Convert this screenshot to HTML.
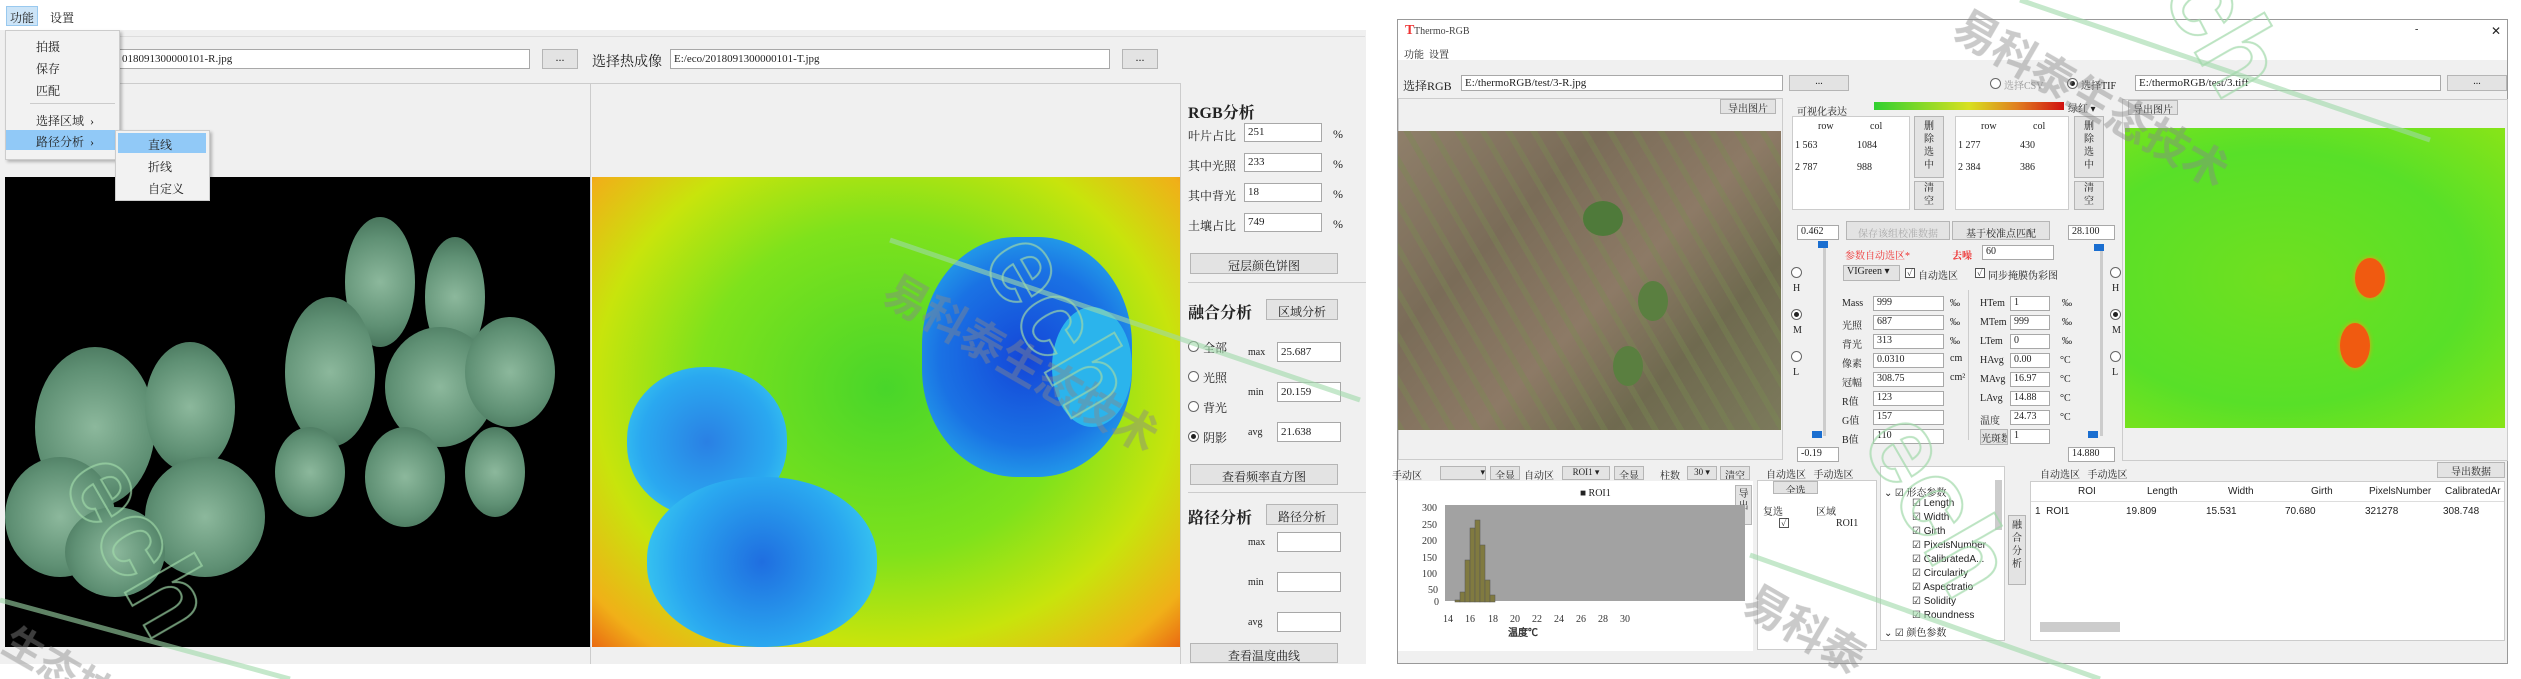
<!DOCTYPE html>
<html style="width:2521px;height:679px;overflow:hidden"><head><meta charset="utf-8"><style>
*{margin:0;padding:0;box-sizing:border-box}
body{width:2521px;height:679px;background:#fff;position:relative;overflow:hidden;font-family:"Liberation Serif","Noto Serif CJK SC",serif;color:#222}
div,span{position:absolute}
.in{background:#fff;border:1px solid #a8a8a8;font-size:11px;padding-left:3px;line-height:normal;white-space:nowrap;overflow:hidden}
.btn{background:#e3e3e3;border:1px solid #b5b5b5;font-size:12px;text-align:center;white-space:nowrap;overflow:hidden}
.t{font-size:12px;white-space:nowrap}
.s{font-size:10px;white-space:nowrap}
.b{font-weight:bold;font-size:16px}
.rad{width:11px;height:11px;border:1px solid #666;border-radius:50%;background:#fff}
.rad.on::after{content:"";position:absolute;left:2px;top:2px;width:5px;height:5px;border-radius:50%;background:#222}
.cb{width:10px;height:10px;border:1px solid #555;background:#fff;font-size:9px;line-height:8px;text-align:center}
.leaf{border-radius:50%;background:radial-gradient(circle,#8cb89c,#5f9074 60%,#3e6a52)}
</style></head><body>

<!-- LEFT APP -->
<div style="left:0;top:0;width:1366px;height:664px;background:#f0f0f0"></div>
<div style="left:0;top:0;width:1366px;height:30px;background:#fff"></div>
<div style="left:6px;top:6px;width:32px;height:20px;background:#cce4f7;border:1px solid #99c9ef"></div>
<span class="t" style="left:10px;top:9px">功能</span>
<span class="t" style="left:50px;top:9px">设置</span>
<div style="left:5px;top:36px;width:1360px;height:1px;background:#ddd"></div>
<div class="in" style="left:118px;top:49px;width:412px;height:20px;padding-top:3px">018091300000101-R.jpg</div>
<div class="btn" style="left:542px;top:49px;width:36px;height:20px">...</div>
<span class="t" style="left:592px;top:51px;font-size:14px">选择热成像</span>
<div class="in" style="left:670px;top:49px;width:440px;height:20px;padding-top:3px">E:/eco/2018091300000101-T.jpg</div>
<div class="btn" style="left:1122px;top:49px;width:36px;height:20px">...</div>
<div style="left:5px;top:83px;width:1176px;height:1px;background:#ccc"></div>
<div style="left:590px;top:84px;width:1px;height:580px;background:#ccc"></div>
<div style="left:1180px;top:84px;width:1px;height:580px;background:#ccc"></div>
<!-- black plant image -->
<div style="left:5px;top:177px;width:585px;height:470px;background:#000;overflow:hidden">
 <div class="leaf" style="left:30px;top:170px;width:120px;height:160px"></div>
 <div class="leaf" style="left:140px;top:165px;width:90px;height:130px"></div>
 <div class="leaf" style="left:0px;top:280px;width:110px;height:120px"></div>
 <div class="leaf" style="left:140px;top:280px;width:120px;height:120px"></div>
 <div class="leaf" style="left:60px;top:330px;width:100px;height:90px"></div>
 <div class="leaf" style="left:340px;top:40px;width:70px;height:130px"></div>
 <div class="leaf" style="left:420px;top:60px;width:60px;height:120px"></div>
 <div class="leaf" style="left:280px;top:120px;width:90px;height:150px"></div>
 <div class="leaf" style="left:380px;top:150px;width:110px;height:120px"></div>
 <div class="leaf" style="left:460px;top:140px;width:90px;height:110px"></div>
 <div class="leaf" style="left:270px;top:250px;width:70px;height:90px"></div>
 <div class="leaf" style="left:360px;top:250px;width:80px;height:100px"></div>
 <div class="leaf" style="left:460px;top:250px;width:60px;height:90px"></div>
</div>
<!-- thermal image -->
<div style="left:592px;top:177px;width:588px;height:470px;background:radial-gradient(ellipse at 50% 45%,#48d62a 0%,#7ee21c 45%,#c8e40c 70%,#f0b018 90%,#ea6a12 100%);overflow:hidden">
 <div style="left:330px;top:60px;width:210px;height:240px;border-radius:45%;background:radial-gradient(circle,#1446d8,#1a72e4 55%,#2ac2ee)"></div>
 <div style="left:460px;top:130px;width:80px;height:120px;border-radius:50%;background:#2bb4ec"></div>
 <div style="left:35px;top:190px;width:160px;height:150px;border-radius:48%;background:radial-gradient(circle,#2a80e4,#2aa8f0 60%,#40d8f0)"></div>
 <div style="left:55px;top:300px;width:230px;height:170px;border-radius:48%;background:radial-gradient(circle,#1f6ee0,#2aa8f0 60%,#40d8f0)"></div>
</div>
<!-- dropdown menu -->
<div style="left:5px;top:30px;width:115px;height:130px;background:#f2f2f2;border:1px solid #ccc;box-shadow:2px 2px 3px rgba(0,0,0,.25)"></div>
<span class="t" style="left:36px;top:38px">拍摄</span>
<span class="t" style="left:36px;top:60px">保存</span>
<span class="t" style="left:36px;top:82px">匹配</span>
<div style="left:30px;top:103px;width:85px;height:1px;background:#ccc"></div>
<span class="t" style="left:36px;top:112px">选择区域 &nbsp;›</span>
<div style="left:6px;top:130px;width:112px;height:20px;background:#91c9f7"></div>
<span class="t" style="left:36px;top:133px">路径分析 &nbsp;›</span>
<div style="left:115px;top:130px;width:95px;height:71px;background:#f2f2f2;border:1px solid #ccc;box-shadow:2px 2px 3px rgba(0,0,0,.25)"></div>
<div style="left:118px;top:133px;width:88px;height:20px;background:#91c9f7"></div>
<span class="t" style="left:148px;top:136px">直线</span>
<span class="t" style="left:148px;top:158px">折线</span>
<span class="t" style="left:148px;top:180px">自定义</span>
<!-- right panel -->
<span class="b" style="left:1188px;top:100px">RGB分析</span>
<span class="t" style="left:1188px;top:127px">叶片占比</span><div class="in" style="left:1244px;top:123px;width:78px;height:19px;padding-top:2px">251</div><span class="t" style="left:1333px;top:127px">%</span>
<span class="t" style="left:1188px;top:157px">其中光照</span><div class="in" style="left:1244px;top:153px;width:78px;height:19px;padding-top:2px">233</div><span class="t" style="left:1333px;top:157px">%</span>
<span class="t" style="left:1188px;top:187px">其中背光</span><div class="in" style="left:1244px;top:183px;width:78px;height:19px;padding-top:2px">18</div><span class="t" style="left:1333px;top:187px">%</span>
<span class="t" style="left:1188px;top:217px">土壤占比</span><div class="in" style="left:1244px;top:213px;width:78px;height:19px;padding-top:2px">749</div><span class="t" style="left:1333px;top:217px">%</span>
<div class="btn" style="left:1190px;top:253px;width:148px;height:21px;padding-top:3px">冠层颜色饼图</div>
<div style="left:1188px;top:282px;width:178px;height:1px;background:#ccc"></div>
<span class="b" style="left:1188px;top:300px">融合分析</span>
<div class="btn" style="left:1266px;top:299px;width:72px;height:21px;padding-top:3px">区域分析</div>
<div class="rad" style="left:1188px;top:341px"></div><span class="t" style="left:1203px;top:339px">全部</span>
<div class="rad" style="left:1188px;top:371px"></div><span class="t" style="left:1203px;top:369px">光照</span>
<div class="rad" style="left:1188px;top:401px"></div><span class="t" style="left:1203px;top:399px">背光</span>
<div class="rad on" style="left:1188px;top:431px"></div><span class="t" style="left:1203px;top:429px">阴影</span>
<span class="s" style="left:1248px;top:347px">max</span><div class="in" style="left:1277px;top:342px;width:64px;height:20px;padding-top:3px">25.687</div>
<span class="s" style="left:1248px;top:387px">min</span><div class="in" style="left:1277px;top:382px;width:64px;height:20px;padding-top:3px">20.159</div>
<span class="s" style="left:1248px;top:427px">avg</span><div class="in" style="left:1277px;top:422px;width:64px;height:20px;padding-top:3px">21.638</div>
<div class="btn" style="left:1190px;top:464px;width:148px;height:21px;padding-top:3px">查看频率直方图</div>
<div style="left:1188px;top:492px;width:178px;height:1px;background:#ccc"></div>
<span class="b" style="left:1188px;top:505px">路径分析</span>
<div class="btn" style="left:1266px;top:504px;width:72px;height:21px;padding-top:3px">路径分析</div>
<span class="s" style="left:1248px;top:537px">max</span><div class="in" style="left:1277px;top:532px;width:64px;height:20px"></div>
<span class="s" style="left:1248px;top:577px">min</span><div class="in" style="left:1277px;top:572px;width:64px;height:20px"></div>
<span class="s" style="left:1248px;top:617px">avg</span><div class="in" style="left:1277px;top:612px;width:64px;height:20px"></div>
<div class="btn" style="left:1190px;top:643px;width:148px;height:20px;padding-top:3px">查看温度曲线</div>

<!-- RIGHT APP -->
<div style="left:1397px;top:19px;width:1111px;height:645px;background:#f0f0f0;border:1px solid #999"></div>
<div style="left:1398px;top:20px;width:1109px;height:40px;background:#fff"></div>
<span style="left:1405px;top:23px;font-size:14px;color:#e33;font-weight:bold">T</span>
<span class="s" style="left:1414px;top:26px;color:#444">Thermo-RGB</span>
<span class="s" style="left:2491px;top:24px;font-size:12px">✕</span>
<span class="s" style="left:2415px;top:24px">-</span>
<span class="s" style="left:1404px;top:46px">功能 &nbsp;设置</span>
<span class="t" style="left:1403px;top:77px">选择RGB</span>
<div class="in" style="left:1461px;top:75px;width:322px;height:16px;padding-top:1px">E:/thermoRGB/test/3-R.jpg</div>
<div class="btn" style="left:1789px;top:75px;width:60px;height:16px;font-size:10px">...</div>
<div class="rad" style="left:1990px;top:78px"></div><span class="s" style="left:2004px;top:77px;color:#999">选择CSV</span>
<div class="rad on" style="left:2067px;top:78px"></div><span class="s" style="left:2081px;top:77px">选择TIF</span>
<div class="in" style="left:2135px;top:75px;width:306px;height:16px;padding-top:1px">E:/thermoRGB/test/3.tiff</div>
<div class="btn" style="left:2447px;top:75px;width:60px;height:16px;font-size:10px">...</div>
<div style="left:1398px;top:98px;width:385px;height:362px;border:1px solid #ccc"></div>
<div class="btn" style="left:1720px;top:99px;width:56px;height:15px;font-size:10px">导出图片</div>
<!-- RGB soil image -->
<div style="left:1398px;top:131px;width:383px;height:299px;background:linear-gradient(135deg,#8f7f6a 0%,#7a6c58 30%,#8d7a66 55%,#6f6a4f 75%,#7c7a5c 100%);overflow:hidden">
 <div style="left:0;top:0;width:383px;height:299px;background:repeating-linear-gradient(60deg,rgba(120,140,80,.35) 0 6px,transparent 6px 22px)"></div>
 <div style="left:185px;top:70px;width:40px;height:35px;border-radius:50%;background:#4f7a3a"></div>
 <div style="left:240px;top:150px;width:30px;height:40px;border-radius:50%;background:#5a7f40"></div>
 <div style="left:215px;top:215px;width:30px;height:40px;border-radius:50%;background:#5a7f40"></div>
</div>
<!-- middle panel -->
<span class="s" style="left:1797px;top:103px">可视化表达</span>
<div style="left:1874px;top:102px;width:190px;height:8px;background:linear-gradient(90deg,#30d030,#d8e020 50%,#e08020 75%,#d01010)"></div>
<span class="s" style="left:2068px;top:100px">绿红 ▾</span>
<div style="left:1792px;top:116px;width:118px;height:94px;background:#fff;border:1px solid #ccc"></div>
<span class="s" style="left:1818px;top:121px">row</span><span class="s" style="left:1870px;top:121px">col</span>
<span class="s" style="left:1795px;top:140px">1 563</span><span class="s" style="left:1857px;top:140px">1084</span>
<span class="s" style="left:1795px;top:162px">2 787</span><span class="s" style="left:1857px;top:162px">988</span>
<div class="btn" style="left:1914px;top:116px;width:30px;height:62px;font-size:10px;padding-top:3px;line-height:13px">删<br>除<br>选<br>中</div>
<div class="btn" style="left:1914px;top:181px;width:30px;height:29px;font-size:10px;line-height:13px">清<br>空</div>
<div style="left:1955px;top:116px;width:114px;height:94px;background:#fff;border:1px solid #ccc"></div>
<span class="s" style="left:1981px;top:121px">row</span><span class="s" style="left:2033px;top:121px">col</span>
<span class="s" style="left:1958px;top:140px">1 277</span><span class="s" style="left:2020px;top:140px">430</span>
<span class="s" style="left:1958px;top:162px">2 384</span><span class="s" style="left:2020px;top:162px">386</span>
<div class="btn" style="left:2074px;top:116px;width:30px;height:62px;font-size:10px;padding-top:3px;line-height:13px">删<br>除<br>选<br>中</div>
<div class="btn" style="left:2074px;top:181px;width:30px;height:29px;font-size:10px;line-height:13px">清<br>空</div>
<div class="in" style="left:1797px;top:225px;width:42px;height:15px;font-size:10px">0.462</div>
<div class="btn" style="left:1846px;top:221px;width:104px;height:19px;font-size:10px;color:#aaa;padding-top:3px">保存该组校准数据</div>
<div class="btn" style="left:1952px;top:221px;width:98px;height:19px;font-size:10px;padding-top:3px">基于校准点匹配</div>
<div class="in" style="left:2068px;top:225px;width:47px;height:15px;font-size:10px">28.100</div>
<div style="left:1823px;top:246px;width:3px;height:190px;background:#ccc"></div>
<div style="left:1818px;top:241px;width:10px;height:7px;background:#1a6ed0"></div>
<div style="left:1812px;top:431px;width:10px;height:7px;background:#1a6ed0"></div>
<div style="left:2100px;top:246px;width:3px;height:190px;background:#ccc"></div>
<div style="left:2094px;top:244px;width:10px;height:7px;background:#1a6ed0"></div>
<div style="left:2088px;top:431px;width:10px;height:7px;background:#1a6ed0"></div>
<div class="rad" style="left:1791px;top:267px"></div><span class="s" style="left:1793px;top:283px">H</span>
<div class="rad on" style="left:1791px;top:309px"></div><span class="s" style="left:1793px;top:325px">M</span>
<div class="rad" style="left:1791px;top:351px"></div><span class="s" style="left:1793px;top:367px">L</span>
<div class="rad" style="left:2110px;top:267px"></div><span class="s" style="left:2112px;top:283px">H</span>
<div class="rad on" style="left:2110px;top:309px"></div><span class="s" style="left:2112px;top:325px">M</span>
<div class="rad" style="left:2110px;top:351px"></div><span class="s" style="left:2112px;top:367px">L</span>
<span class="s" style="left:1845px;top:247px;color:#e33">参数自动选区*</span>
<span class="s" style="left:1952px;top:247px;color:#e33;font-weight:bold">去噪</span>
<div class="in" style="left:1982px;top:245px;width:72px;height:15px;font-size:10px">60</div>
<div class="btn" style="left:1843px;top:265px;width:57px;height:16px;font-size:10px;text-align:left;padding-left:3px">VIGreen ▾</div>
<div class="cb" style="left:1905px;top:268px">✓</div><span class="s" style="left:1918px;top:267px">自动选区</span>
<div class="cb" style="left:1975px;top:268px">✓</div><span class="s" style="left:1988px;top:267px">同步掩膜伪彩图</span>
<div style="left:1968px;top:290px;width:1px;height:150px;background:#ccc"></div>
<span class="s" style="left:1842px;top:298px">Mass</span><div class="in" style="left:1873px;top:296px;width:71px;height:15px;font-size:10px">999</div><span class="s" style="left:1950px;top:298px">‰</span>
<span class="s" style="left:1842px;top:317px">光照</span><div class="in" style="left:1873px;top:315px;width:71px;height:15px;font-size:10px">687</div><span class="s" style="left:1950px;top:317px">‰</span>
<span class="s" style="left:1842px;top:336px">背光</span><div class="in" style="left:1873px;top:334px;width:71px;height:15px;font-size:10px">313</div><span class="s" style="left:1950px;top:336px">‰</span>
<span class="s" style="left:1842px;top:355px">像素</span><div class="in" style="left:1873px;top:353px;width:71px;height:15px;font-size:10px">0.0310</div><span class="s" style="left:1950px;top:353px">cm</span>
<span class="s" style="left:1842px;top:374px">冠幅</span><div class="in" style="left:1873px;top:372px;width:71px;height:15px;font-size:10px">308.75</div><span class="s" style="left:1950px;top:372px">cm²</span>
<span class="s" style="left:1842px;top:393px">R值</span><div class="in" style="left:1873px;top:391px;width:71px;height:15px;font-size:10px">123</div>
<span class="s" style="left:1842px;top:412px">G值</span><div class="in" style="left:1873px;top:410px;width:71px;height:15px;font-size:10px">157</div>
<span class="s" style="left:1842px;top:431px">B值</span><div class="in" style="left:1873px;top:429px;width:71px;height:15px;font-size:10px">110</div>
<span class="s" style="left:1980px;top:298px">HTem</span><div class="in" style="left:2010px;top:296px;width:40px;height:15px;font-size:10px">1</div><span class="s" style="left:2062px;top:298px">‰</span>
<span class="s" style="left:1980px;top:317px">MTem</span><div class="in" style="left:2010px;top:315px;width:40px;height:15px;font-size:10px">999</div><span class="s" style="left:2062px;top:317px">‰</span>
<span class="s" style="left:1980px;top:336px">LTem</span><div class="in" style="left:2010px;top:334px;width:40px;height:15px;font-size:10px">0</div><span class="s" style="left:2062px;top:336px">‰</span>
<span class="s" style="left:1980px;top:355px">HAvg</span><div class="in" style="left:2010px;top:353px;width:40px;height:15px;font-size:10px">0.00</div><span class="s" style="left:2060px;top:355px">°C</span>
<span class="s" style="left:1980px;top:374px">MAvg</span><div class="in" style="left:2010px;top:372px;width:40px;height:15px;font-size:10px">16.97</div><span class="s" style="left:2060px;top:374px">°C</span>
<span class="s" style="left:1980px;top:393px">LAvg</span><div class="in" style="left:2010px;top:391px;width:40px;height:15px;font-size:10px">14.88</div><span class="s" style="left:2060px;top:393px">°C</span>
<span class="s" style="left:1980px;top:412px">温度</span><div class="in" style="left:2010px;top:410px;width:40px;height:15px;font-size:10px">24.73</div><span class="s" style="left:2060px;top:412px">°C</span>
<div class="btn" style="left:1980px;top:429px;width:28px;height:16px;font-size:10px">光斑数</div><div class="in" style="left:2010px;top:429px;width:40px;height:15px;font-size:10px">1</div>
<div class="in" style="left:1797px;top:447px;width:42px;height:15px;font-size:10px">-0.19</div>
<div class="in" style="left:2068px;top:447px;width:47px;height:15px;font-size:10px">14.880</div>
<!-- thermal image right -->
<div style="left:2122px;top:99px;width:386px;height:362px;border:1px solid #ccc"></div>
<div class="btn" style="left:2128px;top:100px;width:50px;height:15px;font-size:10px">导出图片</div>
<div style="left:2125px;top:128px;width:380px;height:300px;background:radial-gradient(ellipse at 40% 50%,#70e020,#58e028 60%,#88e418);overflow:hidden">
 <div style="left:230px;top:130px;width:30px;height:40px;border-radius:50%;background:#f05a10;box-shadow:0 0 5px #f0a010"></div>
 <div style="left:215px;top:195px;width:30px;height:45px;border-radius:50%;background:#f05a10;box-shadow:0 0 5px #f0a010"></div>
</div>
<!-- bottom -->
<span class="s" style="left:1392px;top:467px">手动区</span>
<div class="btn" style="left:1440px;top:466px;width:46px;height:14px;font-size:9px;text-align:right">▾</div>
<div class="btn" style="left:1490px;top:466px;width:30px;height:14px;font-size:10px">全显</div>
<span class="s" style="left:1524px;top:467px">自动区</span>
<div class="btn" style="left:1562px;top:466px;width:48px;height:14px;font-size:9px">ROI1 ▾</div>
<div class="btn" style="left:1614px;top:466px;width:30px;height:14px;font-size:10px">全显</div>
<span class="s" style="left:1660px;top:467px">柱数</span>
<div class="btn" style="left:1687px;top:466px;width:30px;height:14px;font-size:9px">30 ▾</div>
<div class="btn" style="left:1720px;top:466px;width:30px;height:14px;font-size:10px">清空</div>
<div style="left:1398px;top:481px;width:355px;height:170px;background:#fff"></div>
<span class="s" style="left:1580px;top:488px">■ ROI1</span>
<div class="btn" style="left:1735px;top:485px;width:17px;height:40px;font-size:10px;line-height:12px;padding-top:3px">导<br>出</div>
<div style="left:1445px;top:505px;width:300px;height:96px;background:#a2a2a2"></div>
<svg style="position:absolute;left:1398px;top:500px" width="355" height="150">
 <g fill="#807a40" stroke="#555" stroke-width="0.5">
  <rect x="57" y="100" width="5" height="2"/><rect x="62" y="92" width="5" height="10"/><rect x="67" y="60" width="5" height="42"/><rect x="72" y="28" width="5" height="74"/><rect x="77" y="20" width="5" height="82"/><rect x="82" y="45" width="5" height="57"/><rect x="87" y="80" width="5" height="22"/><rect x="92" y="95" width="5" height="7"/>
 </g>
 <g font-size="10" fill="#333" font-family="Liberation Serif">
  <text x="24" y="11">300</text><text x="24" y="28">250</text><text x="24" y="44">200</text><text x="24" y="61">150</text><text x="24" y="77">100</text><text x="30" y="93">50</text><text x="36" y="105">0</text>
  <text x="45" y="122">14</text><text x="67" y="122">16</text><text x="90" y="122">18</text><text x="112" y="122">20</text><text x="134" y="122">22</text><text x="156" y="122">24</text><text x="178" y="122">26</text><text x="200" y="122">28</text><text x="222" y="122">30</text>
  <text x="110" y="136" font-weight="bold">温度℃</text>
 </g>
</svg>
<span class="s" style="left:1766px;top:466px">自动选区 &nbsp; 手动选区</span>
<div style="left:1757px;top:480px;width:120px;height:170px;background:#fff;border:1px solid #ccc"></div>
<div class="btn" style="left:1773px;top:481px;width:45px;height:13px;font-size:10px">全选</div>
<span class="s" style="left:1763px;top:503px">复选</span><span class="s" style="left:1816px;top:503px">区域</span>
<div class="cb" style="left:1779px;top:518px">✓</div><span class="s" style="left:1836px;top:518px">ROI1</span>
<div style="left:1880px;top:466px;width:125px;height:175px;background:#fff;border:1px solid #ccc"></div>
<div style="left:1995px;top:480px;width:7px;height:50px;background:#ccc"></div>
<span class="s" style="left:1884px;top:484px">⌄ ☑ 形态参数</span>
<span class="s" style="left:1912px;top:498px;font-family:'Liberation Sans'">☑ Length</span>
<span class="s" style="left:1912px;top:512px;font-family:'Liberation Sans'">☑ Width</span>
<span class="s" style="left:1912px;top:526px;font-family:'Liberation Sans'">☑ Girth</span>
<span class="s" style="left:1912px;top:540px;font-family:'Liberation Sans'">☑ PixelsNumber</span>
<span class="s" style="left:1912px;top:554px;font-family:'Liberation Sans'">☑ CalibratedA...</span>
<span class="s" style="left:1912px;top:568px;font-family:'Liberation Sans'">☑ Circularity</span>
<span class="s" style="left:1912px;top:582px;font-family:'Liberation Sans'">☑ Aspectratio</span>
<span class="s" style="left:1912px;top:596px;font-family:'Liberation Sans'">☑ Solidity</span>
<span class="s" style="left:1912px;top:610px;font-family:'Liberation Sans'">☑ Roundness</span>
<span class="s" style="left:1884px;top:624px">⌄ ☑ 颜色参数</span>
<div class="btn" style="left:2008px;top:515px;width:18px;height:70px;font-size:10px;line-height:13px;padding-top:3px">融<br>合<br>分<br>析</div>
<span class="s" style="left:2040px;top:466px">自动选区 &nbsp; 手动选区</span>
<div class="btn" style="left:2437px;top:462px;width:68px;height:16px;font-size:10px">导出数据</div>
<div style="left:2030px;top:481px;width:475px;height:160px;background:#fff;border:1px solid #ccc"></div>
<div style="left:2031px;top:482px;width:473px;height:20px;border-bottom:1px solid #ddd"></div>
<span class="s" style="left:2078px;top:486px;font-family:'Liberation Sans'">ROI</span>
<span class="s" style="left:2147px;top:486px;font-family:'Liberation Sans'">Length</span>
<span class="s" style="left:2228px;top:486px;font-family:'Liberation Sans'">Width</span>
<span class="s" style="left:2311px;top:486px;font-family:'Liberation Sans'">Girth</span>
<span class="s" style="left:2369px;top:486px;font-family:'Liberation Sans'">PixelsNumber</span>
<span class="s" style="left:2445px;top:486px;font-family:'Liberation Sans'">CalibratedAr</span>
<span class="s" style="left:2035px;top:506px;font-family:'Liberation Sans'">1 &nbsp;ROI1</span>
<span class="s" style="left:2126px;top:506px;font-family:'Liberation Sans'">19.809</span>
<span class="s" style="left:2206px;top:506px;font-family:'Liberation Sans'">15.531</span>
<span class="s" style="left:2285px;top:506px;font-family:'Liberation Sans'">70.680</span>
<span class="s" style="left:2365px;top:506px;font-family:'Liberation Sans'">321278</span>
<span class="s" style="left:2443px;top:506px;font-family:'Liberation Sans'">308.748</span>
<div style="left:2040px;top:622px;width:80px;height:10px;background:#ccc"></div>

<!-- watermarks -->
<svg style="position:absolute;left:0;top:0" width="2521" height="679">
 <g stroke="#9fd8a8" stroke-width="5" opacity=".6" fill="none">
  <line x1="0" y1="600" x2="290" y2="679"/>
  <line x1="890" y1="240" x2="1360" y2="400"/>
  <line x1="2020" y1="0" x2="2430" y2="140"/>
  <line x1="1750" y1="555" x2="2100" y2="679"/>
 </g>
 <g font-family="Noto Sans CJK SC" font-weight="bold" fill="#888" opacity=".45">
  <text x="880" y="300" font-size="44" transform="rotate(30 880 300)">易科泰生态技术</text>
  <text x="1950" y="35" font-size="44" transform="rotate(30 1950 35)">易科泰生态技术</text>
  <text x="1740" y="610" font-size="44" transform="rotate(30 1740 610)">易科泰</text>
  <text x="0" y="650" font-size="40" transform="rotate(30 0 650)">生态技</text>
 </g>
 <g font-family="Liberation Sans" font-weight="bold" fill="none" stroke="#9fd8a8" stroke-width="2" opacity=".7" font-size="110">
  <text x="980" y="260" transform="rotate(60 980 260)">ech</text>
  <text x="2130" y="-60" transform="rotate(60 2130 -60)">ech</text>
  <text x="1860" y="440" transform="rotate(60 1860 440)">ech</text>
  <text x="60" y="480" transform="rotate(60 60 480)">ech</text>
 </g>
</svg>
</body></html>
